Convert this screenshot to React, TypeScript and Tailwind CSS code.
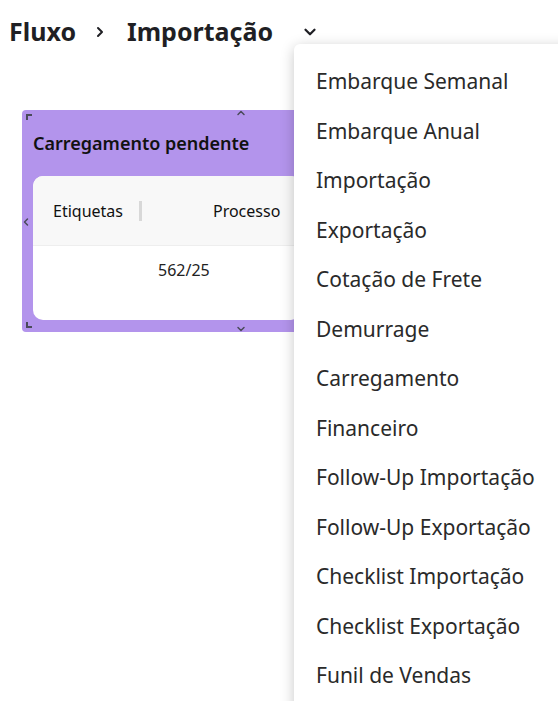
import React from 'react';
import { ChevronRight, ChevronDown, ChevronUp, ChevronLeft } from 'lucide-react';

const MENU_ITEMS = [
  'Embarque Semanal',
  'Embarque Anual',
  'Importação',
  'Exportação',
  'Cotação de Frete',
  'Demurrage',
  'Carregamento',
  'Financeiro',
  'Follow-Up Importação',
  'Follow-Up Exportação',
  'Checklist Importação',
  'Checklist Exportação',
  'Funil de Vendas',
];

// canto de redimensionamento (L pequeno)
const Corner = ({ pos }: { pos: 'tl' | 'bl' }) => (
  <div
    className={
      pos === 'tl'
        ? 'absolute left-[4px] top-[4px] w-[6px] h-[6px] border-l-[2px] border-t-[2px] border-[#4a4a5a]'
        : 'absolute left-[4px] bottom-[4px] w-[6px] h-[6px] border-l-[2px] border-b-[2px] border-[#4a4a5a]'
    }
  />
);

const App: React.FC = () => {
  return (
    <div className="relative w-[558px] h-[701px] overflow-hidden bg-white font-['Noto_Sans',sans-serif] text-[#222]">
      {/* breadcrumb */}
      <div className="flex items-center h-[64px] pl-[9px]">
        <span className="text-[25px] font-bold text-[#1f1f24]">Fluxo</span>
        <ChevronRight className="ml-[16px] w-[16px] h-[16px] text-[#1f1f24]" strokeWidth={3} />
        <span className="ml-[19px] text-[25px] font-bold text-[#1f1f24]">Importação</span>
        <ChevronDown className="ml-[28px] w-[18px] h-[18px] text-[#1f1f24]" strokeWidth={3} />
      </div>

      {/* card */}
      <div className="mt-[46px] ml-[22px] w-[290px] h-[222px] relative rounded-[4px] bg-[#b394ec] px-[11px] pt-[22px] pb-[12px]">
        <Corner pos="tl" />
        <Corner pos="bl" />
        <ChevronUp className="absolute left-[213px] top-[-3px] w-[12px] h-[12px] text-[#4a4a5a]" strokeWidth={3} />
        <ChevronDown className="absolute left-[213px] bottom-[-3px] w-[12px] h-[12px] text-[#4a4a5a]" strokeWidth={3} />
        <ChevronLeft className="absolute left-[-2px] top-[106px] w-[12px] h-[12px] text-[#4a4a5a]" strokeWidth={3} />
        <div className="text-[18px] font-semibold text-[#111] leading-[22px]">Carregamento pendente</div>
        <div className="mt-[22px] h-[144px] rounded-[10px] bg-white overflow-hidden">
          <div className="flex items-center h-[70px] bg-[#f8f8f8] border-b border-[#eeeeee] text-[16px] text-[#111]">
            <span className="pl-[20px]">Etiquetas</span>
            <span className="ml-[16px] w-[3px] h-[20px] bg-[#d8d8d8]" />
            <span className="ml-[71px]">Processo</span>
          </div>
          <div className="h-[48px] flex items-center pl-[125px] text-[16px] text-[#222]">562/25</div>
        </div>
      </div>

      {/* menu suspenso */}
      <div className="absolute left-[294px] top-[44px] w-[280px] h-[680px] rounded-[6px] bg-white shadow-[0_3px_14px_rgba(0,0,0,0.22)] pt-[13px]">
        {MENU_ITEMS.map((item) => (
          <div key={item} className="h-[49.5px] flex items-center pl-[22px] text-[21px] text-[#2a2a2a]">
            {item}
          </div>
        ))}
      </div>
    </div>
  );
};

export default App;
